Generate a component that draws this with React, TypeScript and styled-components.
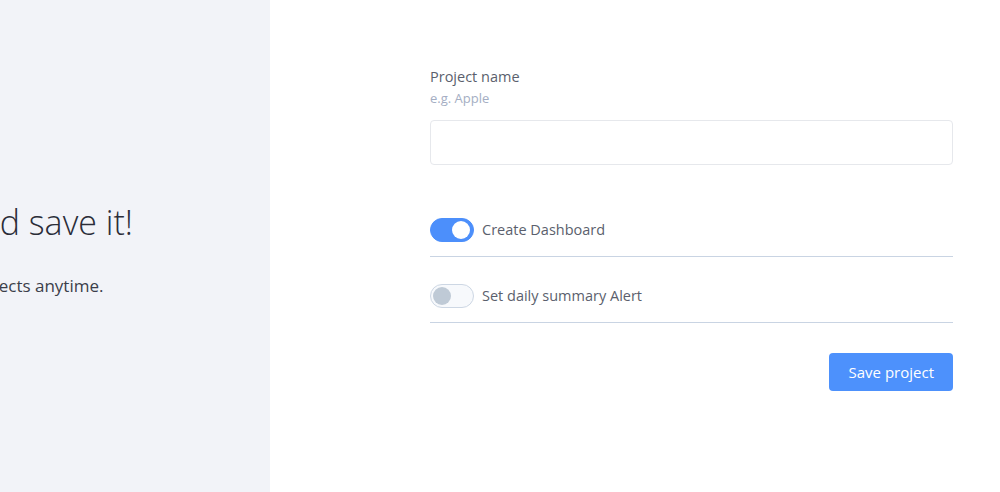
import React, { useState } from 'react';
import styled, { createGlobalStyle } from 'styled-components';

const GlobalStyle = createGlobalStyle`
  html, body {
    margin: 0;
    padding: 0;
    background: #ffffff;
    font-family: 'Open Sans', 'Noto Sans', sans-serif;
  }
`;

const SPage = styled.div`
  display: grid;
  grid-template-columns: 270px 1fr;
  height: 492px;
  overflow: hidden;
`;

const SIntro = styled.div`
  background: #f2f3f8;
  display: flex;
  justify-content: flex-end;
  align-items: flex-start;
  padding: 199px 137px 0 0;
  overflow: hidden;
`;

const SIntroText = styled.div`
  flex-shrink: 0;
  white-space: nowrap;
  text-align: center;
`;

const STitle = styled.h1`
  margin: 0;
  font-size: 34px;
  font-weight: 300;
  line-height: 46px;
  color: #2b2d38;
`;

const SSubtitle = styled.p`
  margin: 29px 0 0;
  font-size: 17px;
  line-height: 24px;
  color: #3b3e4a;
`;

const SForm = styled.div`
  padding: 66px 47px 0 160px;
  display: flex;
  flex-direction: column;
`;

const SLabel = styled.label`
  font-size: 14.5px;
  line-height: 22px;
  color: #5b5f6d;
`;

const SHint = styled.div`
  font-size: 13px;
  line-height: 20px;
  color: #a4aec3;
`;

const SInput = styled.input`
  margin-top: 12px;
  height: 45px;
  box-sizing: border-box;
  border: 1px solid #e6e8ec;
  border-radius: 4px;
  padding: 0 12px;
  font-family: inherit;
  font-size: 15px;
  outline: none;
`;

const SOptions = styled.div`
  margin-top: 41px;
  display: flex;
  flex-direction: column;
`;

const SOption = styled.div`
  display: flex;
  align-items: center;
  gap: 8px;
  padding: 12px 0 14px;
  border-bottom: 1px solid #c9d4e3;
  & + & {
    padding-top: 27px;
  }
`;

const STrack = styled.button<{ $on: boolean }>`
  position: relative;
  width: 44px;
  height: 24px;
  padding: 0;
  border-radius: 12px;
  box-sizing: border-box;
  cursor: pointer;
  border: 1px solid ${(p) => (p.$on ? '#4c8ffb' : '#cdd7e4')};
  background: ${(p) => (p.$on ? '#4c8ffb' : '#f7f9fc')};
`;

const SKnob = styled.span<{ $on: boolean }>`
  position: absolute;
  top: 2px;
  left: ${(p) => (p.$on ? '21px' : '2px')};
  width: 18px;
  height: 18px;
  border-radius: 50%;
  background: ${(p) => (p.$on ? '#ffffff' : '#bfcad6')};
`;

const SOptionText = styled.span`
  font-size: 14.5px;
  line-height: 22px;
  color: #5b5f6d;
`;

const SActions = styled.div`
  display: flex;
  justify-content: flex-end;
  margin-top: 30px;
`;

const SButton = styled.button`
  height: 38px;
  padding: 0 19px 0 20px;
  border: none;
  border-radius: 4px;
  background: #4d91fc;
  color: #ffffff;
  font-family: inherit;
  font-size: 15px;
  cursor: pointer;
`;

type ToggleProps = {
  label: string;
  initial: boolean;
};

const Toggle = ({ label, initial }: ToggleProps) => {
  const [on, setOn] = useState(initial);
  return (
    <SOption>
      <STrack $on={on} onClick={() => setOn(!on)} aria-pressed={on}>
        <SKnob $on={on} />
      </STrack>
      <SOptionText>{label}</SOptionText>
    </SOption>
  );
};

const App = () => {
  return (
    <>
      <GlobalStyle />
      <SPage>
        <SIntro>
          <SIntroText>
            <STitle>Name your project and save it!</STitle>
            <SSubtitle>You can change the name of your projects anytime.</SSubtitle>
          </SIntroText>
        </SIntro>
        <SForm>
          <SLabel htmlFor='project-name'>Project name</SLabel>
          <SHint>e.g. Apple</SHint>
          <SInput id='project-name' type='text' />
          <SOptions>
            <Toggle label='Create Dashboard' initial={true} />
            <Toggle label='Set daily summary Alert' initial={false} />
          </SOptions>
          <SActions>
            <SButton>Save project</SButton>
          </SActions>
        </SForm>
      </SPage>
    </>
  );
};

export default App;
